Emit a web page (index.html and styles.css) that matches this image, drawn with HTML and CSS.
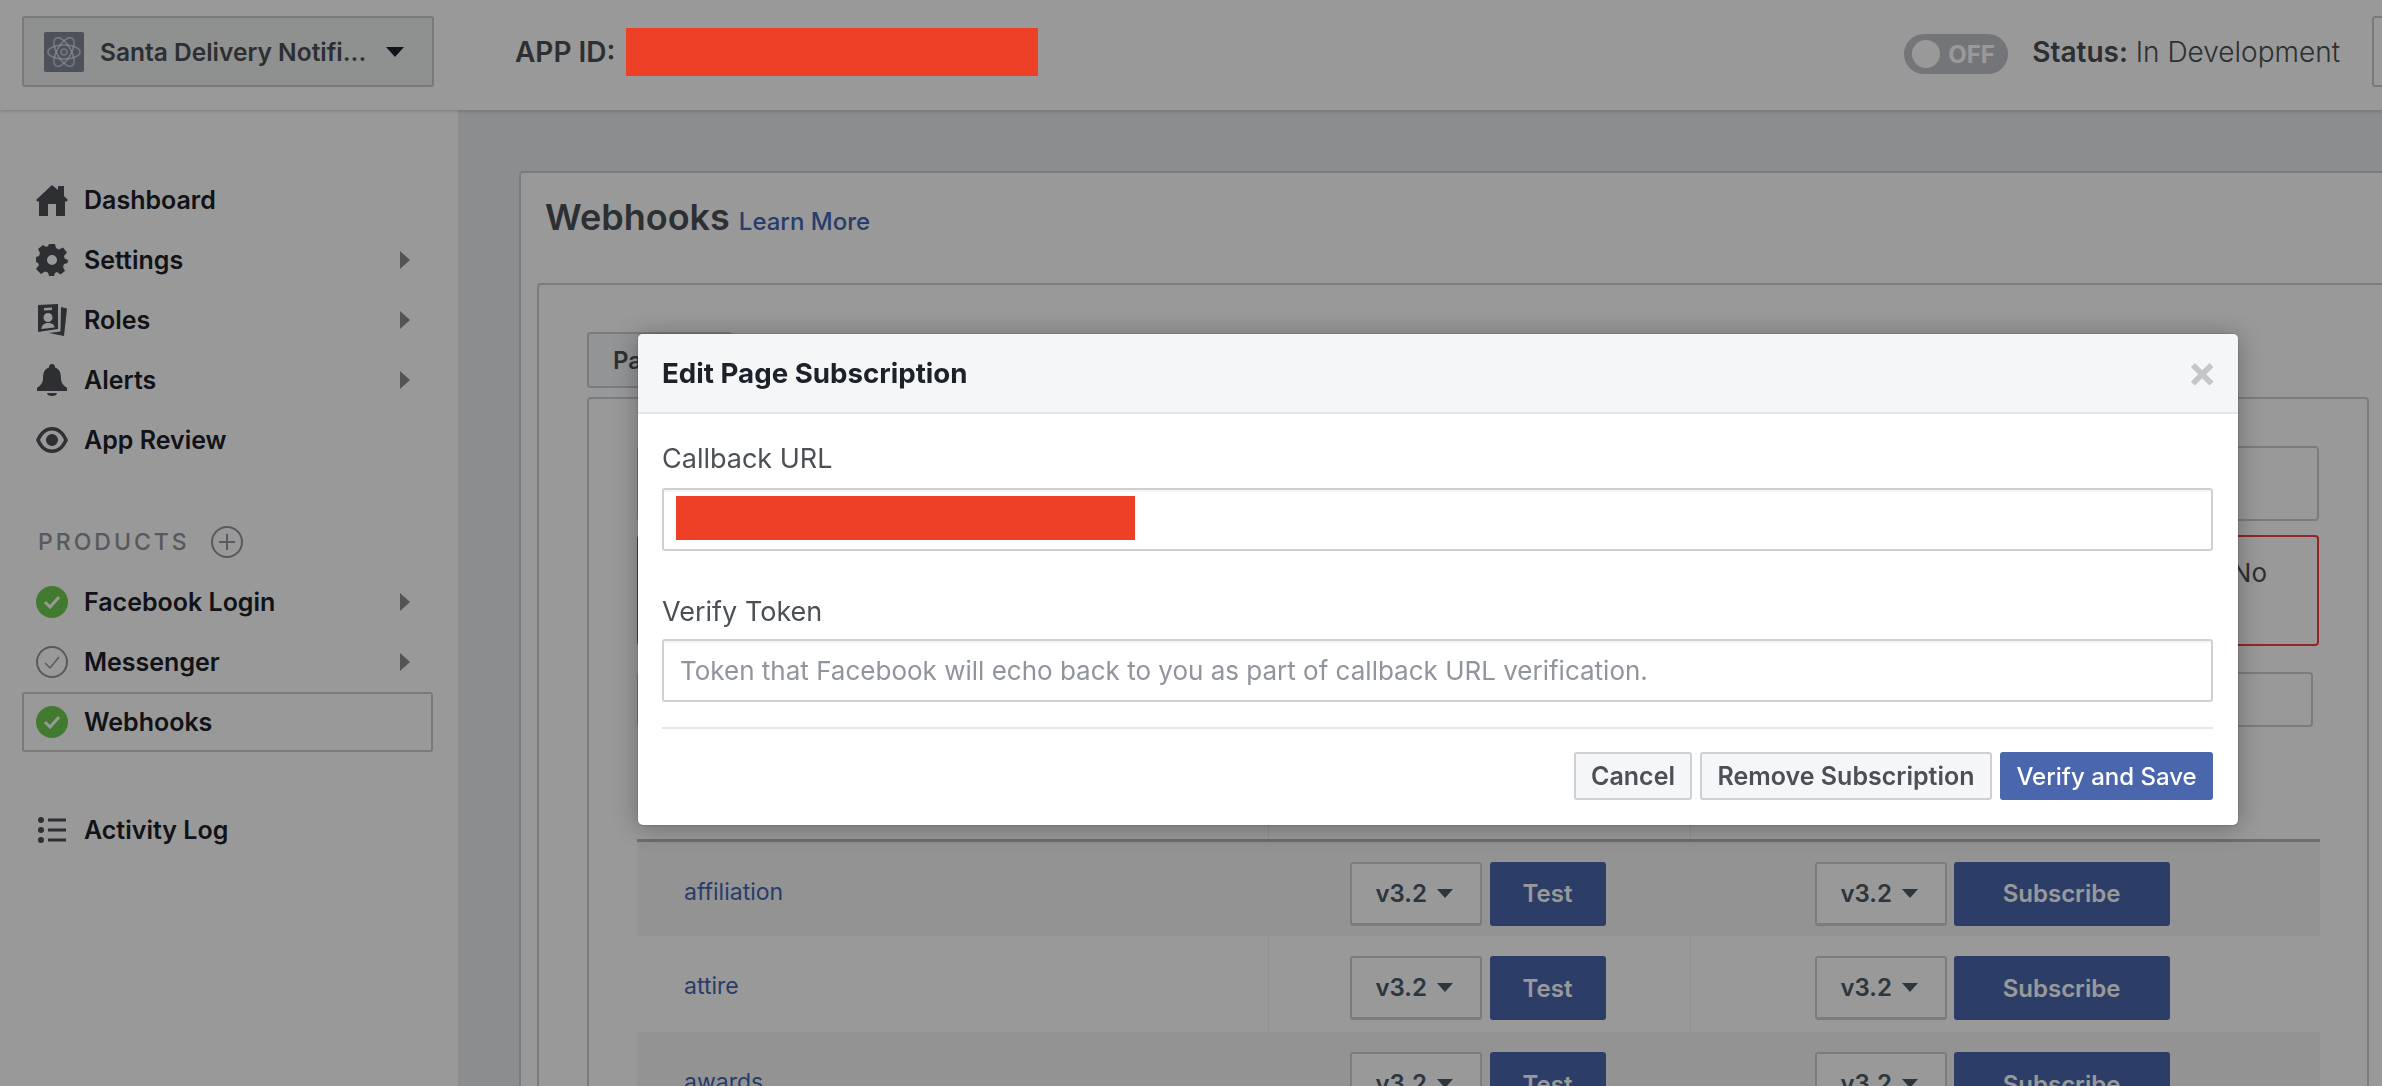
FILE: index.html
```html
<!DOCTYPE html>
<html lang="en">
<head>
  <meta charset="UTF-8">
  <title>Webhooks</title>
  <link rel="stylesheet" href="styles.css">
</head>
<body>

  <header class="topbar">
    <div class="app-switcher">
      <span class="app-icon">
        <svg viewBox="0 0 40 40" width="40" height="40" fill="none" stroke="#fff" stroke-opacity=".55" stroke-width="1.6">
          <ellipse cx="20" cy="20" rx="16" ry="7"/>
          <ellipse cx="20" cy="20" rx="16" ry="7" transform="rotate(60 20 20)"/>
          <ellipse cx="20" cy="20" rx="16" ry="7" transform="rotate(120 20 20)"/>
          <circle cx="20" cy="20" r="3"/>
        </svg>
      </span>
      <span class="app-name">Santa Delivery Notifi...</span>
      <span class="caret"></span>
    </div>
    <div class="app-id">APP ID:</div>
    <div class="redact redact-top"></div>
    <div class="topbar-right">
      <div class="toggle"><span class="knob"></span><span>OFF</span></div>
      <div class="status"><b>Status:</b> In Development</div>
      <div class="top-box"></div>
    </div>
  </header>

  <div class="main">
    <nav class="sidebar">
      <ul class="nav-list">
        <li class="nav-item">
          <svg class="nav-icon" viewBox="0 0 32 32"><path d="M0 16 16 1l6 5V2h6v10l4 4-2 2-1-1v15h-9V20h-8v12H3V17l-1 1z"/></svg>
          Dashboard
        </li>
        <li class="nav-item">
          <svg class="nav-icon" viewBox="0 0 32 32"><path fill-rule="evenodd" d="M13 0h6l1 4 3 1.400 4-2 4 5-3 3.600.6 2.400L32 16l-.4 3-3.600 1-1 3 2 4-4.500 3.500-3.500-2.500-2 1-1 3h-5l-1-3.500-3-1L5 30 0 25l3-4-1-2-2-1v-5l3-1 1-3-2-4 5-4 3 2 2-1zM16 11a5 5 0 1 0 0 10 5 5 0 0 0 0-10z"/></svg>
          Settings
          <span class="arrow"></span>
        </li>
        <li class="nav-item">
          <svg class="nav-icon" viewBox="0 0 32 32"><path fill-rule="evenodd" d="M2 1 22 0v25L2 28zM8 4v2.500l8-.5V3.500zM12 9a4.500 4.500 0 0 0 0 9 4.500 4.500 0 0 0 0-9zM5.500 25l13-1.500c0-3-2.500-4.500-6.500-4.500s-6.500 2.500-6.500 6z"/><path d="M25 3l6 1.500L28 32l-15-3 11.500-1.500z"/></svg>
          Roles
          <span class="arrow"></span>
        </li>
        <li class="nav-item">
          <svg class="nav-icon" viewBox="0 0 32 32"><path d="M16 0c2 0 3 1.500 3 3.500 5 1.500 6 6 6 11 0 5 3 7 6 9.500v3H1v-3c3-2.500 6-4.500 6-9.500 0-5 1-9.500 6-11C13 1.500 14 0 16 0zM11 29h10c0 2-2 3-5 3s-5-1-5-3z"/></svg>
          Alerts
          <span class="arrow"></span>
        </li>
        <li class="nav-item">
          <svg class="nav-icon" viewBox="0 0 32 32"><path fill-rule="evenodd" d="M16 3c8 0 13 6 16 13-3 7-8 13-16 13S3 23 0 16C3 9 8 3 16 3zm0 3.500C10 6.500 6 11 4 16c2 5 6 9.500 12 9.500S26 21 28 16c-2-5-6-9.500-12-9.500zM16 10a6 6 0 1 1 0 12 6 6 0 0 1 0-12z"/></svg>
          App Review
        </li>
      </ul>

      <div class="products-title">
        PRODUCTS
        <svg class="plus" viewBox="0 0 32 32"><circle cx="16" cy="16" r="15"/><path d="M16 8v16M8 16h16"/></svg>
      </div>

      <ul class="nav-list products">
        <li class="nav-item">
          <svg class="nav-icon" viewBox="0 0 32 32"><circle class="ok" cx="16" cy="16" r="16"/><path class="tick" d="m9 16 5 5 9-10"/></svg>
          Facebook Login
          <span class="arrow"></span>
        </li>
        <li class="nav-item">
          <svg class="nav-icon" viewBox="0 0 32 32"><circle class="off" cx="16" cy="16" r="15"/><path class="tick-off" d="m9 17 5 5 9-11"/></svg>
          Messenger
          <span class="arrow"></span>
        </li>
        <li class="nav-item active">
          <svg class="nav-icon" viewBox="0 0 32 32"><circle class="ok" cx="16" cy="16" r="16"/><path class="tick" d="m9 16 5 5 9-10"/></svg>
          Webhooks
        </li>
      </ul>

      <ul class="nav-list log">
        <li class="nav-item">
          <svg class="nav-icon" viewBox="0 0 32 32"><circle cx="5" cy="6" r="3"/><circle cx="5" cy="16" r="3"/><circle cx="5" cy="26" r="3"/><path d="M12 4.500h18v3H12zM12 14.500h18v3H12zM12 24.500h18v3H12z"/></svg>
          Activity Log
        </li>
      </ul>
    </nav>

    <section class="content">
      <div class="card">
        <div class="card-title">
          <h1>Webhooks</h1>
          <a class="learn">Learn More</a>
        </div>
        <div class="inner-card">
          <div class="tab">Page</div>
          <div class="panel">
            <div class="box"></div>
            <div class="box box-error">No</div>
            <div class="box box-search"></div>
            <table class="fields">
              <thead>
                <tr><th></th><th></th><th></th></tr>
              </thead>
              <tbody>
                <tr>
                  <td class="name">affiliation</td>
                  <td><div class="cell-row cell-test"><span class="version">v3.2 <i></i></span><span class="btn-blue btn-test">Test</span></div></td>
                  <td><div class="cell-row cell-sub"><span class="version">v3.2 <i></i></span><span class="btn-blue btn-sub">Subscribe</span></div></td>
                </tr>
                <tr>
                  <td class="name">attire</td>
                  <td><div class="cell-row cell-test"><span class="version">v3.2 <i></i></span><span class="btn-blue btn-test">Test</span></div></td>
                  <td><div class="cell-row cell-sub"><span class="version">v3.2 <i></i></span><span class="btn-blue btn-sub">Subscribe</span></div></td>
                </tr>
                <tr>
                  <td class="name">awards</td>
                  <td><div class="cell-row cell-test"><span class="version">v3.2 <i></i></span><span class="btn-blue btn-test">Test</span></div></td>
                  <td><div class="cell-row cell-sub"><span class="version">v3.2 <i></i></span><span class="btn-blue btn-sub">Subscribe</span></div></td>
                </tr>
              </tbody>
            </table>
          </div>
        </div>
      </div>
    </section>
  </div>

  <div class="overlay"></div>

  <div class="modal">
    <div class="modal-head">
      <span class="modal-title">Edit Page Subscription</span>
      <span class="modal-close">×</span>
    </div>
    <div class="modal-body">
      <label class="field-label">Callback URL</label>
      <div class="field-input"><div class="redact redact-url"></div></div>
      <label class="field-label second">Verify Token</label>
      <div class="field-input placeholder">Token that Facebook will echo back to you as part of callback URL verification.</div>
      <div class="modal-foot">
        <span class="btn btn-cancel">Cancel</span>
        <span class="btn btn-remove">Remove Subscription</span>
        <span class="btn btn-primary">Verify and Save</span>
      </div>
    </div>
  </div>

</body>
</html>
```

FILE: styles.css
```css
* {
  box-sizing: border-box;
}
html, body {
  margin: 0;
  height: 1086px;
  overflow: hidden;
}
body {
  font-family: Inter, "Liberation Sans", sans-serif;
  color: #1d2129;
  background: #e9ebee;
}
ul {
  list-style: none;
  margin: 0;
  padding: 0;
}

/* top bar */
.topbar {
  height: 110px;
  background: #fff;
  box-shadow: 0 1px 4px rgba(0, 0, 0, .2);
  display: flex;
  align-items: center;
  padding: 0 0 7px 22px;
  position: relative;
}
.app-switcher {
  width: 412px;
  height: 71px;
  background: #eef2f0;
  border: 2px solid #ccc;
  border-radius: 3px;
  display: flex;
  align-items: center;
  padding-left: 20px;
}
.app-icon {
  width: 40px;
  height: 40px;
  border-radius: 2px;
  background: #7f8797;
  flex: none;
}
.app-name {
  margin-left: 16px;
  font-size: 24.5px;
  font-weight: 600;
  color: #4b4f56;
  white-space: nowrap;
}
.caret {
  margin-left: 20px;
  border-style: solid;
  border-width: 10px 9px 0;
  border-color: #1d2129 transparent transparent;
}
.app-id {
  margin-left: 81px;
  font-size: 28px;
  font-weight: 600;
  color: #4b4f56;
}
.redact {
  background: #ee4026;
  position: relative;
  z-index: 20;
}
.redact-top {
  width: 412px;
  height: 48px;
  margin-left: 11px;
}
.topbar-right {
  margin-left: auto;
  display: flex;
  align-items: center;
}
.toggle {
  width: 104px;
  height: 40px;
  border-radius: 20px;
  background: #c2c4c9;
  display: flex;
  align-items: center;
  padding-left: 8px;
  gap: 8px;
  font-size: 24px;
  font-weight: 700;
  color: #fff;
  margin-top: 5px;
}
.knob {
  width: 28px;
  height: 28px;
  border-radius: 50%;
  background: #fff;
}
.status {
  margin-left: 24px;
  font-size: 28px;
  font-weight: 300;
  color: #4b4f56;
  white-space: nowrap;
}
.status b {
  font-weight: 600;
}
.top-box {
  width: 40px;
  height: 71px;
  margin-left: 32px;
  margin-right: -30px;
  background: #fff;
  border: 2px solid #ccc;
  border-radius: 3px;
}

/* sidebar */
.main {
  display: flex;
  height: 976px;
}
.sidebar {
  width: 458px;
  flex: none;
  background: #fff;
  padding: 60px 25px 0 22px;
}
.nav-item {
  height: 60px;
  display: flex;
  align-items: center;
  padding-left: 14px;
  font-size: 25px;
  font-weight: 600;
  color: #1d2129;
  border: 2px solid transparent;
  border-left-width: 0;
  position: relative;
}
.nav-icon {
  width: 32px;
  height: 32px;
  margin-right: 16px;
  flex: none;
  fill: #4b4f56;
}
.arrow {
  position: absolute;
  left: 378px;
  top: 19px;
  border-style: solid;
  border-width: 9px 0 9px 10px;
  border-color: transparent transparent transparent #8c8c8c;
}
.products-title {
  margin-top: 58px;
  padding-left: 16px;
  height: 28px;
  display: flex;
  align-items: center;
  font-size: 23px;
  font-weight: 500;
  letter-spacing: 3px;
  color: #90949c;
}
.plus {
  width: 32px;
  height: 32px;
  margin-left: 21px;
  fill: none;
  stroke: #90949c;
  stroke-width: 2;
}
.products {
  margin-top: 16px;
}
.nav-item.active {
  border: 2px solid #ccc;
  border-radius: 3px;
  padding-left: 12px;
}
.ok {
  fill: #6ecb50;
}
.off {
  fill: none;
  stroke: #90949c;
  stroke-width: 2;
}
.tick {
  fill: none;
  stroke: #fff;
  stroke-width: 3;
}
.tick-off {
  fill: none;
  stroke: #90949c;
  stroke-width: 1.5;
}
.log {
  margin-top: 48px;
}

/* page content */
.content {
  flex: 1;
  padding: 61px 0 0 61px;
  min-width: 0;
}
.card {
  width: 2100px;
  height: 1100px;
  background: #fff;
  border: 2px solid #ccd0d5;
  border-radius: 4px;
  padding: 0 16px;
}
.card-title {
  height: 110px;
  display: flex;
  align-items: baseline;
  padding-top: 22px;
  padding-left: 8px;
}
.card-title h1 {
  margin: 0;
  font-size: 36px;
  font-weight: 600;
  color: #4b4f56;
}
.learn {
  margin-left: 9px;
  font-size: 24px;
  font-weight: 500;
  color: #4267b2;
}
.inner-card {
  width: 2060px;
  height: 1000px;
  border: 2px solid #ccd0d5;
  border-radius: 4px;
  padding: 47px 48px;
}
.tab {
  width: 145px;
  height: 56px;
  background: #f6f7f9;
  border: 2px solid #ccd0d5;
  border-radius: 3px;
  font-size: 24px;
  font-weight: 600;
  color: #4b4f56;
  display: flex;
  align-items: center;
  padding-left: 24px;
  margin-bottom: 9px;
}
.panel {
  width: 1782px;
  height: 900px;
  border: 2px solid #ccd0d5;
  border-radius: 4px;
  padding: 47px 48px;
}
.box {
  height: 75px;
  border: 2px solid #ccd0d5;
  border-radius: 4px;
  margin-bottom: 14px;
}
.box-error {
  height: 111px;
  border-color: #fa3e3e;
  margin-bottom: 26px;
  padding: 20px 50px 0 0;
  text-align: right;
  font-size: 26px;
  line-height: 32px;
  color: #4b4f56;
}
.box-search {
  height: 55px;
  margin-right: 6px;
  margin-bottom: 33px;
}

/* table */
.fields {
  width: 1683px;
  border-collapse: collapse;
  table-layout: fixed;
}
.fields th {
  height: 80px;
  border-bottom: 3px solid #b4b6ba;
  padding: 0;
}
.fields th:first-child {
  width: 631px;
}
.fields th:nth-child(2) {
  width: 422px;
  border-left: 1px solid #e9ebee;
  border-right: 1px solid #e9ebee;
}
.fields td {
  height: 96px;
  padding: 20px 0 0;
  vertical-align: top;
}
.fields td:nth-child(2) {
  border-left: 1px solid #f2f3f5;
  border-right: 1px solid #f2f3f5;
}
.fields tbody tr:nth-child(odd) {
  background: #f6f6f6;
}
.fields td.name {
  padding: 36px 0 0 47px;
  font-size: 23px;
  color: #4267b2;
}
.cell-row {
  display: flex;
  gap: 8px;
}
.cell-test {
  padding-left: 81px;
}
.cell-sub {
  padding-left: 124px;
  gap: 7px;
}
.version {
  width: 132px;
  height: 64px;
  background: #fff;
  border: 2px solid #ccd0d5;
  border-bottom-width: 3px;
  border-radius: 3px;
  display: flex;
  align-items: center;
  padding-left: 24px;
  gap: 10px;
  font-size: 24px;
  font-weight: 600;
  color: #4b5a66;
}
.version i {
  border-style: solid;
  border-width: 9px 8px 0;
  border-color: #4b5a66 transparent transparent;
}
.btn-blue {
  height: 64px;
  background: #4a67ad;
  border-radius: 3px;
  display: flex;
  align-items: center;
  justify-content: center;
  font-size: 24px;
  font-weight: 600;
  color: #fff;
}
.btn-test {
  width: 116px;
}
.btn-sub {
  width: 216px;
}

/* dialog */
.overlay {
  position: fixed;
  inset: 0;
  background: rgba(0, 0, 0, .4);
  z-index: 10;
}
.modal {
  position: absolute;
  left: 638px;
  top: 334px;
  width: 1600px;
  height: 491px;
  background: #fff;
  border-radius: 5px;
  box-shadow: 0 2px 26px rgba(0, 0, 0, .3), 0 0 0 1px rgba(0, 0, 0, .1);
  z-index: 20;
}
.modal-head {
  height: 80px;
  background: #f5f6f7;
  border-bottom: 2px solid #e5e5e5;
  border-radius: 5px 5px 0 0;
  display: flex;
  align-items: center;
  justify-content: space-between;
  padding: 0 21px 0 24px;
}
.modal-title {
  font-size: 27.700px;
  font-weight: 700;
  color: #1d2129;
}
.modal-close {
  font-size: 44px;
  font-weight: 700;
  color: #c4c6ca;
  line-height: 1;
  margin-top: -4px;
}
.modal-body {
  padding: 29px 25px 0 24px;
}
.field-label {
  display: block;
  height: 32px;
  line-height: 32px;
  font-size: 27px;
  color: #4b4f56;
  margin-bottom: 13px;
}
.field-label.second {
  margin-top: 45px;
  margin-bottom: 11px;
}
.field-input {
  height: 63px;
  border: 2px solid #ced0d4;
  border-radius: 3px;
  box-shadow: inset 0 2px 0 #f5f5f5;
  padding: 6px 12px;
}
.redact-url {
  width: 459px;
  height: 44px;
}
.placeholder {
  font-size: 26px;
  line-height: 46px;
  padding: 7px 16px 0;
  color: #90949c;
}
.modal-foot {
  margin-top: 25px;
  padding-top: 23px;
  border-top: 2px solid #e5e5e5;
  display: flex;
  justify-content: flex-end;
  gap: 8px;
}
.btn {
  height: 48px;
  background: #f5f6f7;
  border: 2px solid #ced0d4;
  border-radius: 3px;
  display: flex;
  align-items: center;
  justify-content: center;
  font-size: 25px;
  font-weight: 600;
  color: #4b4f56;
}
.btn-cancel {
  width: 118px;
}
.btn-remove {
  width: 292px;
}
.btn-primary {
  width: 213px;
  font-size: 24px;
  font-weight: 500;
  background: #4a67ad;
  border-color: #4a67ad;
  color: #fff;
}
```
